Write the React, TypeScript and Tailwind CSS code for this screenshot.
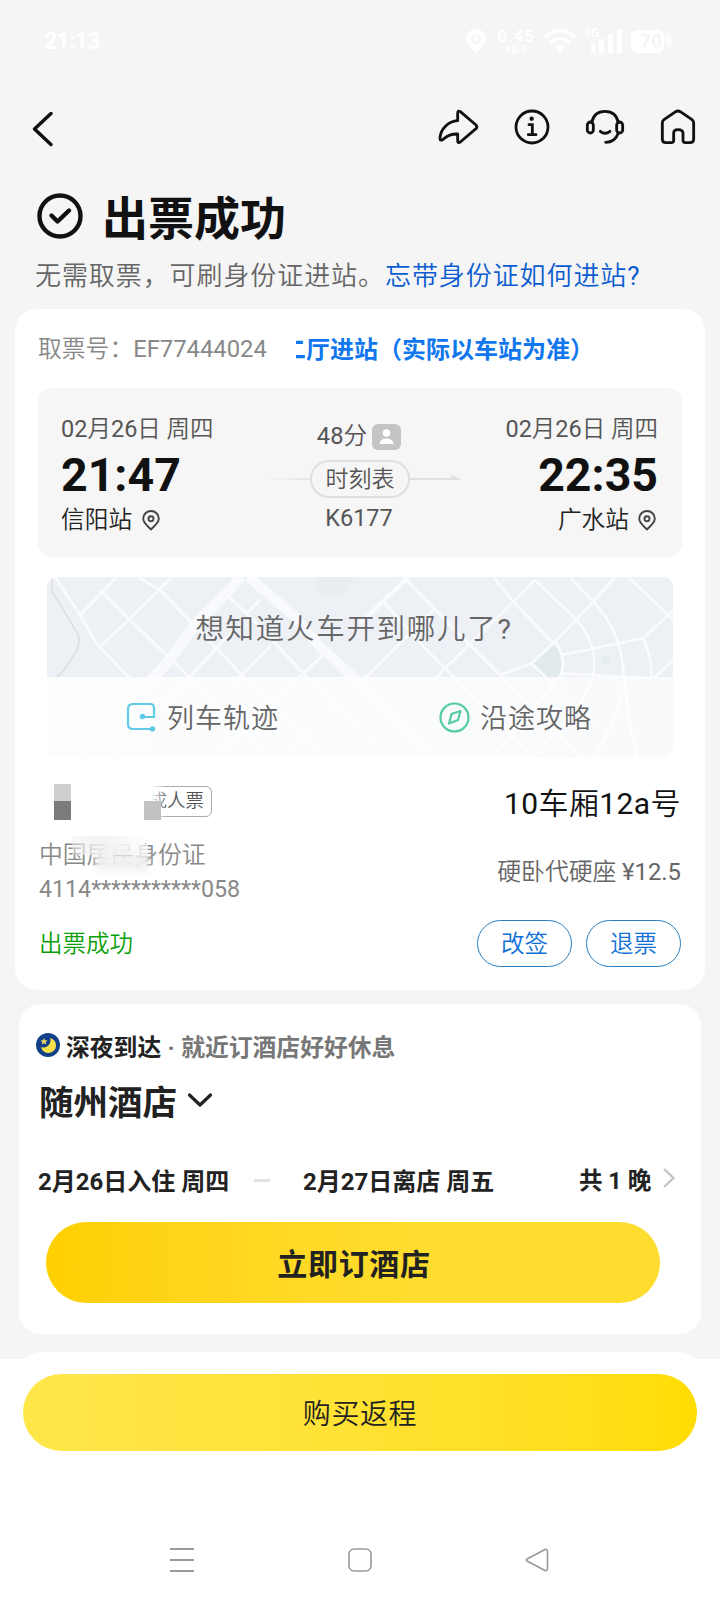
import type { ReactNode } from 'react';

const roads = [
  'M165 51 L240 165 L292 255 L395 360 L450 400',
  'M350 51 L240 165',
  'M300 90 L390 180 L525 310 L810 590',
  'M415 51 L480 90 L650 265 L725 345 L980 590',
  'M515 51 L385 180 L300 260',
  'M670 95 L740 160 L900 330 L1030 460 L1160 590',
  'M740 160 L780 120',
  'M340 590 L570 350 L700 210',
  'M700 370 L810 260',
  'M640 590 L970 285',
  'M1220 60 L1365 210 L1500 345 L1740 590',
  'M1145 120 L1280 270 L1380 370 L1600 590',
  'M1480 51 L1540 125 L1660 250',
  'M1605 60 L1540 125 L1350 310 L1080 580',
  'M1300 150 L1100 350 L860 590',
  'M1605 60 L1720 170 Q1790 240 1782 330 Q1770 400 1700 480 L1600 590',
  'M1710 51 L1780 125 Q1860 210 1870 330 Q1880 450 1910 590',
  'M1845 51 L1780 125 L1665 245 L1595 310 L1500 345',
  'M1885 51 L2020 180',
  'M2020 150 L1930 235 L1685 285',
  'M1930 235 Q1955 290 1955 350',
  'M1685 340 L1960 355 L2020 300',
  'M1665 245 Q1705 300 1680 350 L1480 590',
  'M1595 310 L1790 500',
  'M1870 400 Q1830 520 1780 590',
];

// latin and digits sit one step heavier than the chinese around them
function Num({ children }: { children: ReactNode }) {
  return <span className="font-normal">{children}</span>;
}

function PinIcon() {
  return (
    <svg className="h-[21px] w-[18px]" viewBox="0 0 18 21" fill="none" stroke="#444" strokeWidth="1.9">
      <path d="M9 19.5 C5 15.5 1.2 13 1.2 8.6 A7.8 7.6 0 0 1 16.8 8.6 C16.8 13 13 15.5 9 19.5Z" strokeLinejoin="round" />
      <circle cx="9" cy="8.7" r="2.5" />
    </svg>
  );
}

function StatusBar() {
  return (
    <div className="flex h-[82px] items-center justify-between pr-[47px] pl-11 text-white">
      <span className="text-[23px] leading-none font-bold tracking-[-0.7px]">21:13</span>
      <div className="flex items-center">
        <svg className="h-6 w-5" viewBox="0 0 20 24">
          <path fill="#fff" fillRule="evenodd" d="M10 0 A10 10 0 0 1 20 10 C20 16 14 20 10 24 C6 20 0 16 0 10 A10 10 0 0 1 10 0Z M10 5 A5 5 0 1 0 10 15 A5 5 0 1 0 10 5Z" />
          <circle cx="10" cy="10" r="2.4" fill="#fff" />
        </svg>
        <div className="ml-2.5 flex w-[40px] flex-col items-center font-bold">
          <span className="text-[17px] leading-[17px] tracking-[0.8px]">0.45</span>
          <span className="text-[10px] leading-[10px]">KB/S</span>
        </div>
        <svg className="ml-2 h-6 w-8" viewBox="0 0 32 24" fill="none" stroke="#fff" strokeWidth="3.4">
          <path d="M1 8 Q16 -5 31 8" />
          <path d="M6 14 Q16 5 26 14" />
          <path d="M11 18 L16 23 L21 18 Q16 14 11 18Z" fill="#fff" stroke="none" />
        </svg>
        <div className="relative ml-3 h-6 w-[36px]">
          <span className="absolute -top-0.5 -left-1 text-[12px] leading-none font-bold">5G</span>
          <svg className="h-6 w-9" viewBox="0 0 36 24" fill="#fff">
            <rect x="3" y="15" width="4" height="9" rx="1" />
            <rect x="11" y="10" width="5" height="14" rx="1" />
            <rect x="20" y="5" width="5" height="19" rx="1" />
            <rect x="29" y="0" width="5" height="24" rx="1" />
          </svg>
        </div>
        <div className="ml-[7px] flex h-[23px] w-[33px] items-center justify-end rounded-md bg-white pr-0.5 text-[19px] font-bold text-[#f5f5f5]">
          70
        </div>
        <div className="ml-px h-3 w-[8px] rounded-r bg-white/60" />
      </div>
    </div>
  );
}

function Header() {
  return (
    <header className="flex h-[94px] items-center justify-between pr-[23px] pl-[31px]">
      <svg className="h-9 w-6" viewBox="0 0 24 36" fill="none" stroke="#111" strokeWidth="3.5" strokeLinecap="round" strokeLinejoin="round">
        <path d="M20 2.5 L3.5 18 L20 33.5" />
      </svg>
      <div className="flex items-center gap-[34px] pb-1">
        <svg className="h-[38px] w-[42px]" viewBox="0 0 126 112" fill="none" stroke="#111" strokeWidth="8.5" strokeLinejoin="round">
          <path d="M62 37 V15 Q62 5 70 10 L117 50 Q122 56 117 61 L70 101 Q62 106 62 97 V77 Q38 76 22 90 Q8 102 9 88 C11 62 33 39 62 37Z" />
        </svg>
        <svg className="h-[38px] w-[38px]" viewBox="0 0 114 114" fill="none" stroke="#111" strokeWidth="8.5" strokeLinecap="round">
          <circle cx="57" cy="57" r="48" />
          <circle cx="56" cy="32" r="6.5" fill="#111" stroke="none" />
          <path d="M48 50 H58 V79 M46 80 H69" />
        </svg>
        <svg className="h-[38px] w-[40px]" viewBox="0 0 120 114" fill="none" stroke="#111" strokeWidth="8.5" strokeLinecap="round">
          <path d="M20 44 Q27 10 60 10 Q93 10 100 44" />
          <rect x="7" y="42" width="18" height="33" rx="9" />
          <rect x="95" y="42" width="18" height="33" rx="9" />
          <path d="M100 75 Q90 103 62 103" />
          <path d="M46 70 Q60 82 75 70" />
        </svg>
        <svg className="h-[38px] w-[38px]" viewBox="0 0 114 114" fill="none" stroke="#111" strokeWidth="8.5" strokeLinejoin="round">
          <path d="M10 45 Q10 39 15 35 L50 11 Q57 7 64 11 L99 35 Q104 39 104 45 V94 Q103 104 93 104 H79 Q72 104 72 97 V75 Q71 65 57 65 Q44 65 44 75 V97 Q44 104 37 104 H20 Q11 104 10 94Z" />
        </svg>
      </div>
    </header>
  );
}

function TripDate() {
  return (
    <span className="h-7 text-[23.5px] leading-7 text-[#555]">
      <Num>02</Num>月<Num>26</Num>日 周四
    </span>
  );
}

function Trip() {
  return (
    <div className="mx-[23px] flex h-[169px] justify-between rounded-[14px] bg-[#f6f6f6] pr-6 pl-[23px] pt-[27px]">
      <div className="flex flex-col">
        <TripDate />
        <span className="h-[63px] pt-px text-[46.5px] leading-[62px] font-bold text-[#111]">21:47</span>
        <span className="flex h-7 items-center gap-[10px] text-[23.7px] leading-7 text-[#222]">
          信阳站
          <PinIcon />
        </span>
      </div>
      <div className="mt-2 ml-[3px] flex flex-col items-center text-[#555]">
        <div className="mr-1 flex h-7 items-center gap-[5px] text-[23.7px]">
          <span>
            <Num>48</Num>分
          </span>
          <svg className="h-[26px] w-[29px]" viewBox="0 0 29 26">
            <rect width="29" height="26" rx="6" fill="#c4c4c4" />
            <circle cx="14.5" cy="9" r="3.8" fill="#fff" />
            <path d="M7.5 20 Q8 14.5 14.5 14.5 Q21 14.5 21.5 20Z" fill="#fff" />
          </svg>
        </div>
        <div className="mt-[9px] ml-1.5 flex items-center">
          <div className="h-0.5 w-[44px] bg-linear-to-r from-[#f6f6f6] to-[#e4e4e4]" />
          <div className="flex h-[38px] w-[100px] items-center justify-center rounded-full border-[2.5px] border-[#dedede] pt-0.5 text-[23px]">
            时刻表
          </div>
          <svg className="h-2 w-[52px]" viewBox="0 0 52 8" fill="#e0e0e0">
            <rect y="3" width="44" height="2" />
            <path d="M41 0 L52 5 H41Z" />
          </svg>
        </div>
        <span className="mt-1.5 mr-1 text-[23.5px] leading-7 font-normal">K6177</span>
      </div>
      <div className="flex flex-col items-end">
        <TripDate />
        <span className="h-[63px] pt-px text-[46.5px] leading-[62px] font-bold text-[#111]">22:35</span>
        <span className="flex h-7 items-center gap-[9px] pr-0.5 text-[23.7px] leading-7 text-[#222]">
          广水站
          <PinIcon />
        </span>
      </div>
    </div>
  );
}

function MapPanel() {
  return (
    <div className="relative mx-8 mt-5 h-[180px] overflow-hidden rounded-[10px] bg-[#edf0f5] text-[#666]">
      <svg className="absolute inset-0 h-[180px] w-[626px]" viewBox="141 51 1878 540" fill="none">
        <path d="M960 51 H1060 Q1060 100 1000 115 Q960 110 940 80Z" fill="#e9eef1" />
        <path d="M1660 250 Q1695 290 1680 350 L1630 360 L1600 310Z" fill="#e2ebec" />
        <circle cx="1817" cy="300" r="12" fill="#e4edee" />
        <path d="M155 55 L157 95 L235 225 Q242 250 228 275 L200 320 L145 380" stroke="#dcdfe3" strokeWidth="5" />
        {roads.map((d) => (
          <path key={d} d={d} stroke="#fafbfe" strokeWidth="8" />
        ))}
        <path d="M1225 51 L1080 190" stroke="#fafbfe" strokeWidth="12" />
        <path d="M725 51 L590 190 L500 310 L430 385 L240 580" stroke="#f9fafd" strokeWidth="32" />
        <path d="M745 51 L880 165 L960 260 L1080 370 L1300 590" stroke="#f9fafd" strokeWidth="30" />
      </svg>
      <div className="relative flex h-[100px] items-center justify-center pt-1.5 pr-3 text-[28.5px] tracking-[1.7px]">
        <span>
          想知道火车开到哪儿了<Num>?</Num>
        </span>
      </div>
      <div className="relative flex h-20 items-center bg-white/65 bg-linear-to-r from-white/60 to-white/0 text-[27px] tracking-[1px]">
        <div className="flex w-1/2 items-center gap-[11px] pl-[79px]">
          <svg className="h-[30px] w-[30px]" viewBox="0 0 30 30" fill="none" stroke="#5fcbe6" strokeWidth="2.2">
            <path d="M27 27 H7 Q2 27 2 22 V7 Q2 2 7 2 H24 Q28 2 28 6 V15 H17" />
            <circle cx="16.5" cy="14.5" r="2.7" fill="#5fcbe6" stroke="none" />
            <circle cx="26.5" cy="27" r="2.7" fill="#5fcbe6" stroke="none" />
          </svg>
          <span className="pt-1">列车轨迹</span>
        </div>
        <div className="flex w-1/2 items-center gap-2.5 pl-[79px]">
          <svg className="h-[31px] w-[31px]" viewBox="0 0 31 31" fill="none" stroke="#55cca0" strokeWidth="2.2">
            <circle cx="15.5" cy="15.5" r="14" />
            <path d="M21.5 9 L19 18 L10 21.5 L12.5 12Z" strokeLinejoin="round" />
          </svg>
          <span className="pt-1">沿途攻略</span>
        </div>
      </div>
    </div>
  );
}

function OutlineButton({ children }: { children: ReactNode }) {
  return (
    <button className="h-[47px] w-[95px] rounded-full border border-[#2b7fc0] pt-0.5 text-[23.5px] text-[#0f70d8]">
      {children}
    </button>
  );
}

function Passenger() {
  return (
    <div className="px-6 pt-[26px]">
      <div className="flex h-[38px] items-center justify-between">
        <div className="relative flex h-[38px] w-[173px] items-center justify-end">
          <span className="mb-0.5 flex h-[31px] w-[70px] items-center justify-end rounded-md border border-[#aaa] pt-0.5 pr-[7px] text-[18.5px] text-[#555]">
            成人票
          </span>
          <div className="absolute top-0 left-[98px] h-[38px] w-7 bg-linear-to-r from-white from-50% to-white/20" />
          <div className="absolute top-px left-[15px] h-[17px] w-[17px] bg-[#cfcfcf]" />
          <div className="absolute top-[18px] left-[15px] h-[19px] w-[17px] bg-[#7b7b7b]" />
          <div className="absolute top-[18px] left-[105px] h-[19px] w-[17px] bg-[#c2c2c2]" />
        </div>
        <span className="pt-[3px] text-[30px] leading-none tracking-[0.4px] text-[#111]">
          <Num>10</Num>车厢<Num>12a</Num>号
        </span>
      </div>
      <div className="mt-[17px] flex items-center justify-between">
        <div className="relative flex flex-col leading-[34px] text-[#888]">
          <span className="text-[23.8px]">中国居民身份证</span>
          <span className="text-[23.2px] font-normal">4114***********058</span>
          <div className="absolute -top-0.5 left-[33px] h-[19px] w-[76px] bg-linear-to-r from-[#eee]/50 via-[#f4f4f4] to-white/70" />
          <div className="absolute top-[15px] left-[56px] h-[18px] w-[54px] bg-[#f0f0f0]/95 blur-[3px]" />
        </div>
        <span className="pt-0.5 text-[23.8px] text-[#666]">
          硬卧代硬座 <Num>¥12.5</Num>
        </span>
      </div>
      <div className="mt-[14px] flex h-[47px] items-center justify-between">
        <span className="pt-[3px] text-[23.5px] text-[#0a9f0a]">出票成功</span>
        <div className="flex gap-[14px]">
          <OutlineButton>改签</OutlineButton>
          <OutlineButton>退票</OutlineButton>
        </div>
      </div>
    </div>
  );
}

function Hotel() {
  return (
    <section className="mx-[19px] mt-[14px] h-[330px] rounded-[22px] bg-white pt-[26px] text-[#222]">
      <div className="flex h-[34px] items-center pt-[3px] pl-[17px] text-[23.8px] font-bold">
        <svg className="mr-[6px] mb-2 h-6 w-6" viewBox="0 0 24 24">
          <circle cx="12" cy="12" r="12" fill="#12408a" />
          <path d="M14 5 A7.6 7.6 0 1 1 5 14 A7 7 0 0 0 14 5Z" fill="#f7e04a" />
          <path d="M8 5 L9 7.2 L11.5 7.5 L9.7 9.2 L10.2 11.5 L8 10.3 L5.8 11.5 L6.3 9.2 L4.5 7.5 L7 7.2Z" fill="#e8d860" />
        </svg>
        深夜到达
        <span className="w-[20px] text-center text-[#777]">·</span>
        <span className="text-[#777]">就近订酒店好好休息</span>
      </div>
      <div className="mt-[17px] flex h-[42px] items-center gap-2.5 pt-[3px] pl-5 text-[34.5px] font-bold">
        随州酒店
        <svg className="mb-2 h-4 w-[26px]" viewBox="0 0 26 16" fill="none" stroke="#222" strokeWidth="3.2" strokeLinecap="round" strokeLinejoin="round">
          <path d="M2.5 3 L13 13 L23.5 3" />
        </svg>
      </div>
      <div className="mt-[42px] flex h-8 items-center pt-0.5 pl-[19px] text-[24px] font-bold">
        <span className="w-[216px]">2月26日入住 周四</span>
        <span className="mb-1 h-[3px] w-4 bg-[#e2e2e2]" />
        <span className="ml-[33px] w-[276px]">2月27日离店 周五</span>
        <span className="w-[84px] text-[23.5px]">共 1 晚</span>
        <svg className="mb-2 h-5 w-3" viewBox="0 0 12 20" fill="none" stroke="#c4c4c4" strokeWidth="2.4">
          <path d="M1 1 L10.5 10 L1 19" />
        </svg>
      </div>
      <button className="mt-[25px] ml-[27px] flex h-[81px] w-[614px] items-center justify-center rounded-full bg-linear-to-r from-[#ffd000] to-[#ffdd2e] to-60% pt-1 pl-0.5 text-[30px] font-bold tracking-[0.7px]">
        立即订酒店
      </button>
    </section>
  );
}

function NavBar() {
  return (
    <nav className="mt-[97px] flex justify-between pr-[171px] pl-[170px]">
      <svg className="h-6 w-6" viewBox="0 0 24 24" stroke="#999" strokeWidth="1.8">
        <path d="M0 1 H24 M0 12 H24 M0 23 H24" />
      </svg>
      <svg className="h-6 w-6" viewBox="0 0 24 24" fill="none" stroke="#999" strokeWidth="1.6">
        <rect x="1" y="1" width="22" height="22" rx="5" />
      </svg>
      <svg className="h-6 w-6" viewBox="0 0 24 24" fill="none" stroke="#999" strokeWidth="1.6" strokeLinejoin="round">
        <path d="M2 11 L20 1.5 Q22.5 1 22.5 3.5 V20.5 Q22.5 23 20 22.5 L2 13 Q0.5 12 2 11Z" />
      </svg>
    </nav>
  );
}

export default function App() {
  return (
    <div className="h-[1604px] w-[720px] overflow-hidden bg-[#f5f5f5] font-['Roboto','Noto_Sans_CJK_SC',sans-serif] font-[350]">
      <StatusBar />
      <Header />
      <div className="flex h-20 items-center pl-[37px]">
        <svg className="h-[46px] w-[46px]" viewBox="0 0 46 46" fill="none" stroke="#111" strokeWidth="4.4" strokeLinecap="round" strokeLinejoin="round">
          <circle cx="23" cy="23" r="20.5" />
          <path d="M14.5 22.5 L20.5 28.5 L32 17.5" />
        </svg>
        <h1 className="ml-[19px] pt-[5px] text-[46px] leading-none font-bold text-[#111]">出票成功</h1>
      </div>
      <p className="h-10 pl-[35px] text-[26px] leading-10 tracking-[0.92px] whitespace-nowrap text-[#666]">
        无需取票，可刷身份证进站。
        <span className="text-[#0b5cd0]">
          忘带身份证如何进站<Num>?</Num>
        </span>
      </p>

      <section className="mx-[15px] mt-[13px] h-[681px] rounded-[22px] bg-white">
        <div className="flex h-[79px] items-center pt-[3px] pl-[23px] text-[23.8px]">
          <span className="w-[258px] text-[#888]">
            取票号：<Num>EF77444024</Num>
          </span>
          <span className="flex w-[370px] justify-start overflow-hidden font-bold whitespace-nowrap text-[#1177ee]">
            <span className="-ml-[14px] text-[24px]">二厅进站（实际以车站为准）</span>
          </span>
        </div>
        <Trip />
        <MapPanel />
        <Passenger />
      </section>

      <Hotel />

      <div className="mx-[19px] mt-[18px] h-7 rounded-t-[22px] bg-white" />
      <footer className="relative -mt-[21px] h-[246px] bg-white pt-[15px]">
        <button className="mx-[23px] flex h-[77px] w-[674px] items-center justify-center rounded-full bg-linear-to-r from-[#ffe74a] to-[#ffdd00] pt-1 text-[28px] tracking-[0.6px] text-[#222]">
          购买返程
        </button>
        <NavBar />
      </footer>
    </div>
  );
}
